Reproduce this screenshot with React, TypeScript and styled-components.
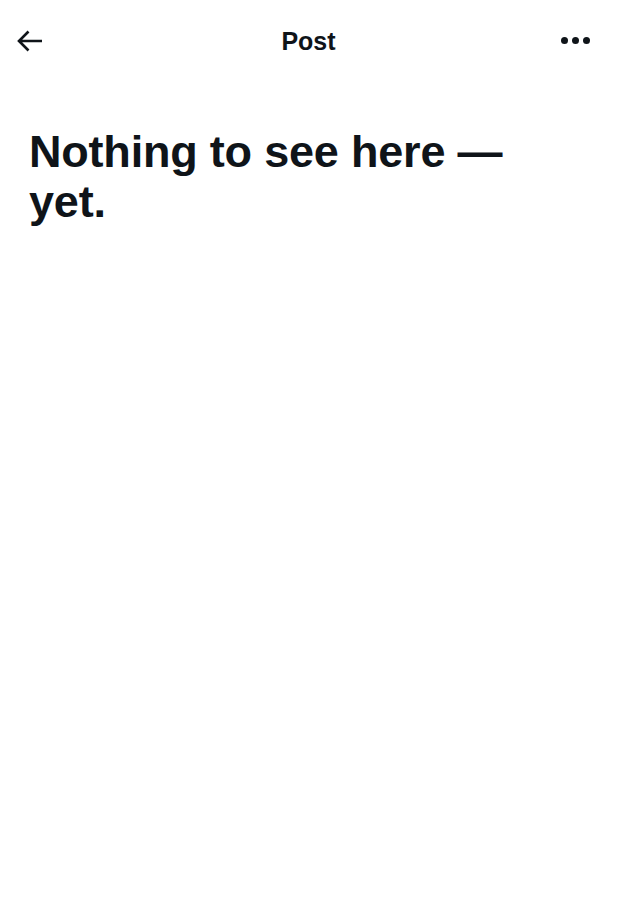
import styled, { createGlobalStyle } from 'styled-components';

const GlobalStyle = createGlobalStyle`
    html, body {
        margin: 0;
        padding: 0;
        background: #ffffff;
    }
    body {
        font-family: "Liberation Sans", Arial, sans-serif;
        color: #0f1419;
    }
`

const BackArrow = () => (
    <svg width="28" height="24" viewBox="0 0 28 24" fill="none">
        <path
            d="M26 12H3M12.5 2.5L3 12l9.5 9.5"
            stroke="#0f1419"
            strokeWidth="2.6"
            strokeLinecap="butt"
            strokeLinejoin="miter"
        />
    </svg>
)

const App = () => {
    return (
        <Page>
            <GlobalStyle />
            <Header>
                <IconButton aria-label="Back">
                    <BackArrow />
                </IconButton>
                <Title>Post</Title>
                <More aria-label="More">
                    <Dot />
                    <Dot />
                    <Dot />
                </More>
            </Header>
            <Empty>
                <Heading>Nothing to see here — yet.</Heading>
            </Empty>
        </Page>
    )
}

const Page = styled.div`
    width: 617px;
    min-height: 914px;
    background: #ffffff;
`

const Header = styled.header`
    height: 81px;
    display: grid;
    grid-template-columns: 1fr auto 1fr;
    align-items: center;
    padding: 0 16px;
    box-sizing: border-box;
`

const IconButton = styled.div`
    justify-self: start;
    line-height: 0;
`

const Title = styled.h1`
    margin: 0;
    font-size: 25px;
    line-height: 28px;
    font-weight: 700;
    color: #0f1419;
`

const More = styled.div`
    justify-self: end;
    display: flex;
    gap: 4px;
    margin-right: 11px;
`

const Dot = styled.span`
    width: 7px;
    height: 7px;
    border-radius: 50%;
    background: #0f1419;
`

const Empty = styled.section`
    padding: 46px 29px 0;
`

const Heading = styled.h2`
    margin: 0;
    max-width: 500px;
    font-size: 45px;
    line-height: 50px;
    font-weight: 700;
    letter-spacing: -0.2px;
    color: #0f1419;
`

export default App;
